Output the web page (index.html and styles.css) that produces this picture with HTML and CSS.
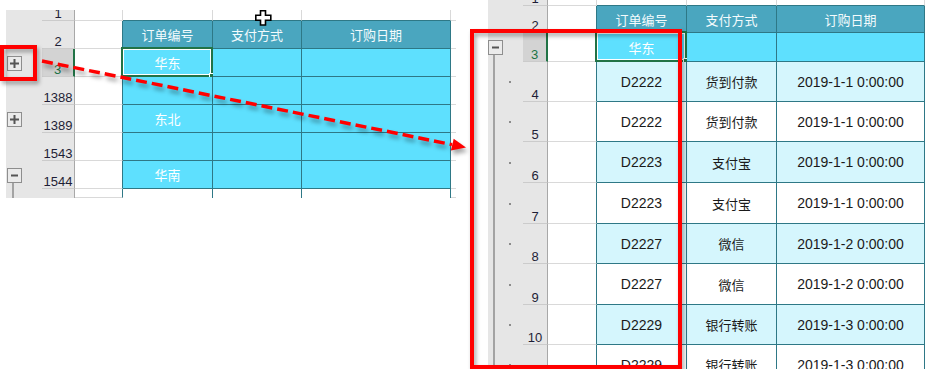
FILE: index.html
```html
<!DOCTYPE html>
<html lang="zh-CN">
<head>
<meta charset="utf-8">
<title>分级显示</title>
<link rel="stylesheet" href="styles.css">
</head>
<body>
<div class="stage">
  <div class="sheet left">
    <!-- row 1 -->
    <div class="ol"></div><div class="rh"><span>1</span></div><div class="ca"></div><div class="top"></div><div class="top"></div><div class="top"></div><div class="ex"></div>
    <!-- row 2 -->
    <div class="ol"></div><div class="rh"><span>2</span></div><div class="ca edge"></div><div class="tc hd">订单编号</div><div class="tc hd">支付方式</div><div class="tc hd">订购日期</div><div class="ex"></div>
    <!-- row 3 -->
    <div class="ol"><span class="box"><svg width="9" height="9" viewBox="0 0 9 9"><path d="M0 4.5h9M4.5 0v9" stroke="#555" stroke-width="2"/></svg></span></div><div class="rh on"><span>3</span></div><div class="ca edge"></div><div class="tc cy">华东<span class="sel"><i class="handle"></i></span></div><div class="tc cy"></div><div class="tc cy"></div><div class="ex"></div>
    <!-- 1388 -->
    <div class="ol"></div><div class="rh"><span>1388</span></div><div class="ca edge"></div><div class="tc cy"></div><div class="tc cy"></div><div class="tc cy"></div><div class="ex"></div>
    <!-- 1389 -->
    <div class="ol"><span class="box"><svg width="9" height="9" viewBox="0 0 9 9"><path d="M0 4.5h9M4.5 0v9" stroke="#555" stroke-width="2"/></svg></span></div><div class="rh"><span>1389</span></div><div class="ca edge"></div><div class="tc cy">东北</div><div class="tc cy"></div><div class="tc cy"></div><div class="ex"></div>
    <!-- 1543 -->
    <div class="ol"></div><div class="rh"><span>1543</span></div><div class="ca edge"></div><div class="tc cy"></div><div class="tc cy"></div><div class="tc cy"></div><div class="ex"></div>
    <!-- 1544 -->
    <div class="ol lnb"><span class="box"><svg width="9" height="9" viewBox="0 0 9 9"><path d="M1 4.5h7" stroke="#555" stroke-width="2"/></svg></span></div><div class="rh"><span>1544</span></div><div class="ca edge"></div><div class="tc cy">华南</div><div class="tc cy"></div><div class="tc cy"></div><div class="ex"></div>
    <!-- partial -->
    <div class="ol ln"></div><div class="rh open"></div><div class="ca edge open"></div><div class="tc wh open"></div><div class="tc wh open"></div><div class="tc wh open"></div><div class="ex open"></div>
  </div>

  <div class="sheet right">
    <!-- row 1 -->
    <div class="ol"></div><div class="rh"><span>1</span></div><div class="ca"></div><div class="top"></div><div class="top"></div><div class="top"></div>
    <!-- row 2 -->
    <div class="ol"></div><div class="rh"><span>2</span></div><div class="ca edge"></div><div class="tc hd">订单编号</div><div class="tc hd">支付方式</div><div class="tc hd">订购日期</div>
    <!-- row 3 -->
    <div class="ol lnb"><span class="box"><svg width="9" height="9" viewBox="0 0 9 9"><path d="M1 4.5h7" stroke="#555" stroke-width="2"/></svg></span></div><div class="rh on"><span>3</span></div><div class="ca edge"></div><div class="tc cy">华东<span class="sel"><i class="handle"></i></span></div><div class="tc cy"></div><div class="tc cy"></div>
    <!-- 4 -->
    <div class="ol ln"><i class="dot"></i></div><div class="rh"><span>4</span></div><div class="ca edge"></div><div class="tc lc">D2222</div><div class="tc lc cn">货到付款</div><div class="tc lc">2019-1-1 0:00:00</div>
    <!-- 5 -->
    <div class="ol ln"><i class="dot"></i></div><div class="rh"><span>5</span></div><div class="ca edge"></div><div class="tc wh">D2222</div><div class="tc wh cn">货到付款</div><div class="tc wh">2019-1-1 0:00:00</div>
    <!-- 6 -->
    <div class="ol ln"><i class="dot"></i></div><div class="rh"><span>6</span></div><div class="ca edge"></div><div class="tc lc">D2223</div><div class="tc lc cn">支付宝</div><div class="tc lc">2019-1-1 0:00:00</div>
    <!-- 7 -->
    <div class="ol ln"><i class="dot"></i></div><div class="rh"><span>7</span></div><div class="ca edge"></div><div class="tc wh">D2223</div><div class="tc wh cn">支付宝</div><div class="tc wh">2019-1-1 0:00:00</div>
    <!-- 8 -->
    <div class="ol ln"><i class="dot"></i></div><div class="rh"><span>8</span></div><div class="ca edge"></div><div class="tc lc">D2227</div><div class="tc lc cn">微信</div><div class="tc lc">2019-1-2 0:00:00</div>
    <!-- 9 -->
    <div class="ol ln"><i class="dot"></i></div><div class="rh"><span>9</span></div><div class="ca edge"></div><div class="tc wh">D2227</div><div class="tc wh cn">微信</div><div class="tc wh">2019-1-2 0:00:00</div>
    <!-- 10 -->
    <div class="ol ln"><i class="dot"></i></div><div class="rh"><span>10</span></div><div class="ca edge"></div><div class="tc lc">D2229</div><div class="tc lc cn">银行转账</div><div class="tc lc">2019-1-3 0:00:00</div>
    <!-- 11 (partly visible) -->
    <div class="ol ln"><i class="dot"></i></div><div class="rh"></div><div class="ca edge"></div><div class="tc wh">D2229</div><div class="tc wh cn">银行转账</div><div class="tc wh">2019-1-3 0:00:00</div>
  </div>

  <svg class="cursor" width="17" height="16" viewBox="0 0 17 16"><polygon points="5.5,0.8 10.5,0.8 10.5,5.3 15.8,5.3 15.8,10.3 10.5,10.3 10.5,15 5.5,15 5.5,10.3 0.8,10.3 0.8,5.3 5.5,5.3" fill="#fff" stroke="#000" stroke-width="1.6"/></svg>

  <div class="mark mark-a"></div>
  <div class="mark mark-b"></div>

  <svg class="arrow" width="925" height="369" viewBox="0 0 925 369">
    <line x1="42" y1="61" x2="452" y2="144.6" stroke="#ff0000" stroke-width="3.5" stroke-dasharray="11 5"/>
    <polygon points="466,147.6 450.9,150.6 453.7,138.8" fill="#ff0000"/>
  </svg>
</div>
</body>
</html>
```
FILE: styles.css
```css
html, body {
  margin: 0;
  padding: 0;
  background: #ffffff;
}

body {
  font-family: "Liberation Sans", "Noto Sans CJK SC", sans-serif;
}

.stage {
  position: relative;
  width: 925px;
  height: 369px;
  display: flex;
  align-items: flex-start;
  overflow: hidden;
}

.sheet {
  display: grid;
  overflow: hidden;
}

.left {
  margin: 10px 0 0 6px;
  grid-template-columns: 36px 33px 48px 90px 89px 149px 5px;
  grid-template-rows: 11px repeat(6, 28px) 9px;
}

.right {
  margin-left: 32px;
  height: 369px;
  grid-template-columns: 35px 25px 49px 90px 90px 148px;
  grid-template-rows: 6px 27px 29px 40px 40px 41px 41px 40px 41px 40px 40px;
}

.sheet > div {
  box-sizing: border-box;
  display: flex;
  align-items: center;
  justify-content: center;
  min-width: 0;
  min-height: 0;
  overflow: hidden;
}

/* outline gutter */
.sheet > .ol {
  background: #e6e6e6;
  justify-content: flex-start;
}

.left > .ol {
  padding-left: 1px;
}

.left > .ol.ln {
  background: linear-gradient(#a3a3a3, #a3a3a3) no-repeat 6px 0 / 2px 100%, #e6e6e6;
}

.left > .ol.lnb {
  background: linear-gradient(#a3a3a3, #a3a3a3) no-repeat 6px 100% / 2px 8px, #e6e6e6;
}

.right > .ol.ln {
  background: linear-gradient(#a3a3a3, #a3a3a3) no-repeat 5px 0 / 2px 100%, #e6e6e6;
}

.right > .ol.lnb {
  background: linear-gradient(#a3a3a3, #a3a3a3) no-repeat 5px 100% / 2px 8px, #e6e6e6;
}

.box {
  width: 15px;
  height: 15px;
  box-sizing: border-box;
  border: 1px solid #8e8e8e;
  background: #ebebeb;
  display: flex;
  align-items: center;
  justify-content: center;
}

.box svg {
  display: block;
}

.dot {
  display: block;
  width: 2px;
  height: 2px;
  margin-left: 21px;
  background: #8c8c8c;
}

/* row headers */
.sheet > .rh {
  background: #e6e6e6;
  border-right: 1px solid #a8a8a8;
  border-bottom: 1px solid #cbcbcb;
  align-items: flex-end;
  font-size: 13px;
  line-height: 13px;
  color: #1e1e36;
}

.sheet > .rh.on {
  background: #d3d3d3;
  border-right: 2px solid #217346;
  color: #217346;
}

.sheet > .rh.open,
.sheet > .open {
  border-bottom: 0;
}

/* column A */
.sheet > .ca {
  background: #ffffff;
  border-right: 1px solid #d9d9d9;
  border-bottom: 1px solid #d9d9d9;
}

.sheet > .ca.edge {
  border-right-color: #2e7886;
}

/* row above the table */
.sheet > .top {
  background: #ffffff;
  border-right: 1px solid #d9d9d9;
  border-bottom: 1px solid #2e7886;
}

.sheet > .ex {
  background: #ffffff;
  border-bottom: 1px solid #d9d9d9;
}

/* table cells */
.sheet > .tc {
  position: relative;
  overflow: visible;
  border-right: 1px solid #2e7886;
  border-bottom: 1px solid #2e7886;
  font-size: 14px;
  color: #1a1a1a;
  white-space: nowrap;
}

.sheet > .tc.open {
  border-bottom: 0;
}

.sheet > .hd {
  background: #4aa6bf;
  color: #f3fbfd;
  font-size: 13px;
}

.sheet > .cy {
  background: #5ee0fe;
  color: #ffffff;
  font-size: 13px;
}

.sheet > .lc {
  background: #d5f6fd;
}

.sheet > .wh {
  background: #ffffff;
}

.sheet > .cn {
  font-size: 13px;
}

/* selected cell frame */
.sel {
  position: absolute;
  left: -2px;
  top: -2px;
  right: -1px;
  bottom: -1px;
  border: 2px solid #217346;
  box-shadow: inset 0 0 0 1px #ffffff;
}

.handle {
  position: absolute;
  right: -5px;
  bottom: -5px;
  width: 5px;
  height: 5px;
  background: #217346;
  border: 1px solid #ffffff;
}

/* overlays */
.cursor {
  position: absolute;
  left: 255px;
  top: 10px;
}

.mark {
  position: absolute;
  box-sizing: border-box;
  border: 4px solid #ff0000;
  filter: drop-shadow(2px 3px 2px rgba(0, 0, 0, 0.35));
}

.mark-a {
  left: 0;
  top: 45px;
  width: 37px;
  height: 36px;
}

.mark-b {
  left: 470px;
  top: 29px;
  width: 212px;
  height: 340px;
}

.arrow {
  position: absolute;
  left: 0;
  top: 0;
  pointer-events: none;
  filter: drop-shadow(2px 4px 2px rgba(0, 0, 0, 0.35));
}
```
